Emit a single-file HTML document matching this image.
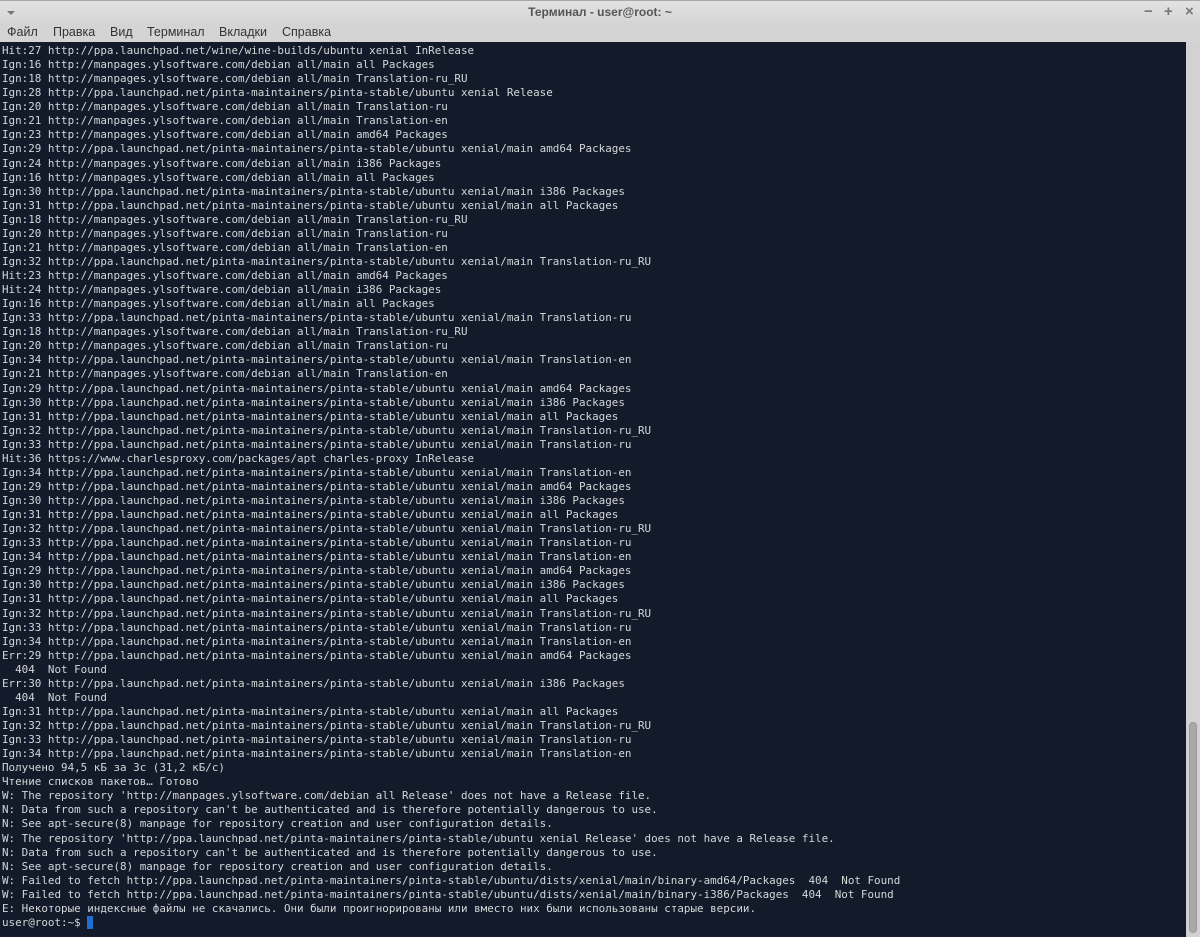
<!DOCTYPE html>
<html><head><meta charset="utf-8"><style>
html,body{margin:0;padding:0;width:1200px;height:937px;overflow:hidden;background:#d4d4d4;font-family:"Liberation Sans","DejaVu Sans",sans-serif}
#title{position:absolute;left:0;top:0;width:1200px;height:22px;background:linear-gradient(#e2e2e2,#d6d6d6);border-top:1px solid #a8a8a8;box-sizing:border-box}
#title .t{position:absolute;left:0;right:0;top:4px;text-align:center;font-size:12px;font-weight:bold;color:#555}
#title .arr{position:absolute;left:7px;top:10px;width:0;height:0;border-left:4px solid transparent;border-right:4px solid transparent;border-top:4px solid #777}
#title .b{position:absolute;top:2px;font-size:15px;color:#777;font-weight:bold}
#menu{position:absolute;left:0;top:22px;height:20px;width:1200px;background:#d4d4d4;font-size:12.5px;color:#333}
#menu span{position:absolute;top:3px}
#term{position:absolute;left:0;top:42px;width:1186px;height:895px;background:#131a2a;overflow:hidden}
pre{margin:0;padding:2px 0 0 2px;font-family:"DejaVu Sans Mono","Liberation Mono",monospace;font-size:10.9px;line-height:14.07px;color:#d3d7d9}
#sb{position:absolute;left:1186px;top:42px;width:14px;height:895px;background:#d2d2d2}
#thumb{position:absolute;left:1189px;top:722px;width:8px;height:211px;background:#a9a9a9;border-radius:4px;border:1px solid #9a9a9a;box-sizing:border-box}
.cur{display:inline-block;width:6px;height:13px;background:#1e6fd0;vertical-align:-3px}
</style></head><body>
<div id="title"><div class="arr"></div><div class="t">Терминал - user@root: ~</div>
<span class="b" style="left:1144px">−</span><span class="b" style="left:1164px">+</span><span class="b" style="left:1185px">×</span></div>
<div id="menu"><span style="left:7px">Файл</span><span style="left:53px">Правка</span><span style="left:110px">Вид</span><span style="left:147px">Терминал</span><span style="left:219px">Вкладки</span><span style="left:282px">Справка</span></div>
<div id="term"><pre>Hit:27 http://ppa.launchpad.net/wine/wine-builds/ubuntu xenial InRelease
Ign:16 http://manpages.ylsoftware.com/debian all/main all Packages
Ign:18 http://manpages.ylsoftware.com/debian all/main Translation-ru_RU
Ign:28 http://ppa.launchpad.net/pinta-maintainers/pinta-stable/ubuntu xenial Release
Ign:20 http://manpages.ylsoftware.com/debian all/main Translation-ru
Ign:21 http://manpages.ylsoftware.com/debian all/main Translation-en
Ign:23 http://manpages.ylsoftware.com/debian all/main amd64 Packages
Ign:29 http://ppa.launchpad.net/pinta-maintainers/pinta-stable/ubuntu xenial/main amd64 Packages
Ign:24 http://manpages.ylsoftware.com/debian all/main i386 Packages
Ign:16 http://manpages.ylsoftware.com/debian all/main all Packages
Ign:30 http://ppa.launchpad.net/pinta-maintainers/pinta-stable/ubuntu xenial/main i386 Packages
Ign:31 http://ppa.launchpad.net/pinta-maintainers/pinta-stable/ubuntu xenial/main all Packages
Ign:18 http://manpages.ylsoftware.com/debian all/main Translation-ru_RU
Ign:20 http://manpages.ylsoftware.com/debian all/main Translation-ru
Ign:21 http://manpages.ylsoftware.com/debian all/main Translation-en
Ign:32 http://ppa.launchpad.net/pinta-maintainers/pinta-stable/ubuntu xenial/main Translation-ru_RU
Hit:23 http://manpages.ylsoftware.com/debian all/main amd64 Packages
Hit:24 http://manpages.ylsoftware.com/debian all/main i386 Packages
Ign:16 http://manpages.ylsoftware.com/debian all/main all Packages
Ign:33 http://ppa.launchpad.net/pinta-maintainers/pinta-stable/ubuntu xenial/main Translation-ru
Ign:18 http://manpages.ylsoftware.com/debian all/main Translation-ru_RU
Ign:20 http://manpages.ylsoftware.com/debian all/main Translation-ru
Ign:34 http://ppa.launchpad.net/pinta-maintainers/pinta-stable/ubuntu xenial/main Translation-en
Ign:21 http://manpages.ylsoftware.com/debian all/main Translation-en
Ign:29 http://ppa.launchpad.net/pinta-maintainers/pinta-stable/ubuntu xenial/main amd64 Packages
Ign:30 http://ppa.launchpad.net/pinta-maintainers/pinta-stable/ubuntu xenial/main i386 Packages
Ign:31 http://ppa.launchpad.net/pinta-maintainers/pinta-stable/ubuntu xenial/main all Packages
Ign:32 http://ppa.launchpad.net/pinta-maintainers/pinta-stable/ubuntu xenial/main Translation-ru_RU
Ign:33 http://ppa.launchpad.net/pinta-maintainers/pinta-stable/ubuntu xenial/main Translation-ru
Hit:36 https://www.charlesproxy.com/packages/apt charles-proxy InRelease
Ign:34 http://ppa.launchpad.net/pinta-maintainers/pinta-stable/ubuntu xenial/main Translation-en
Ign:29 http://ppa.launchpad.net/pinta-maintainers/pinta-stable/ubuntu xenial/main amd64 Packages
Ign:30 http://ppa.launchpad.net/pinta-maintainers/pinta-stable/ubuntu xenial/main i386 Packages
Ign:31 http://ppa.launchpad.net/pinta-maintainers/pinta-stable/ubuntu xenial/main all Packages
Ign:32 http://ppa.launchpad.net/pinta-maintainers/pinta-stable/ubuntu xenial/main Translation-ru_RU
Ign:33 http://ppa.launchpad.net/pinta-maintainers/pinta-stable/ubuntu xenial/main Translation-ru
Ign:34 http://ppa.launchpad.net/pinta-maintainers/pinta-stable/ubuntu xenial/main Translation-en
Ign:29 http://ppa.launchpad.net/pinta-maintainers/pinta-stable/ubuntu xenial/main amd64 Packages
Ign:30 http://ppa.launchpad.net/pinta-maintainers/pinta-stable/ubuntu xenial/main i386 Packages
Ign:31 http://ppa.launchpad.net/pinta-maintainers/pinta-stable/ubuntu xenial/main all Packages
Ign:32 http://ppa.launchpad.net/pinta-maintainers/pinta-stable/ubuntu xenial/main Translation-ru_RU
Ign:33 http://ppa.launchpad.net/pinta-maintainers/pinta-stable/ubuntu xenial/main Translation-ru
Ign:34 http://ppa.launchpad.net/pinta-maintainers/pinta-stable/ubuntu xenial/main Translation-en
Err:29 http://ppa.launchpad.net/pinta-maintainers/pinta-stable/ubuntu xenial/main amd64 Packages
  404  Not Found
Err:30 http://ppa.launchpad.net/pinta-maintainers/pinta-stable/ubuntu xenial/main i386 Packages
  404  Not Found
Ign:31 http://ppa.launchpad.net/pinta-maintainers/pinta-stable/ubuntu xenial/main all Packages
Ign:32 http://ppa.launchpad.net/pinta-maintainers/pinta-stable/ubuntu xenial/main Translation-ru_RU
Ign:33 http://ppa.launchpad.net/pinta-maintainers/pinta-stable/ubuntu xenial/main Translation-ru
Ign:34 http://ppa.launchpad.net/pinta-maintainers/pinta-stable/ubuntu xenial/main Translation-en
Получено 94,5 кБ за 3с (31,2 кБ/c)
Чтение списков пакетов… Готово
W: The repository 'http://manpages.ylsoftware.com/debian all Release' does not have a Release file.
N: Data from such a repository can't be authenticated and is therefore potentially dangerous to use.
N: See apt-secure(8) manpage for repository creation and user configuration details.
W: The repository 'http://ppa.launchpad.net/pinta-maintainers/pinta-stable/ubuntu xenial Release' does not have a Release file.
N: Data from such a repository can't be authenticated and is therefore potentially dangerous to use.
N: See apt-secure(8) manpage for repository creation and user configuration details.
W: Failed to fetch http://ppa.launchpad.net/pinta-maintainers/pinta-stable/ubuntu/dists/xenial/main/binary-amd64/Packages  404  Not Found
W: Failed to fetch http://ppa.launchpad.net/pinta-maintainers/pinta-stable/ubuntu/dists/xenial/main/binary-i386/Packages  404  Not Found
E: Некоторые индексные файлы не скачались. Они были проигнорированы или вместо них были использованы старые версии.
user@root:~$ <span class="cur"></span></pre></div>
<div id="sb"></div><div id="thumb"></div>
</body></html>
